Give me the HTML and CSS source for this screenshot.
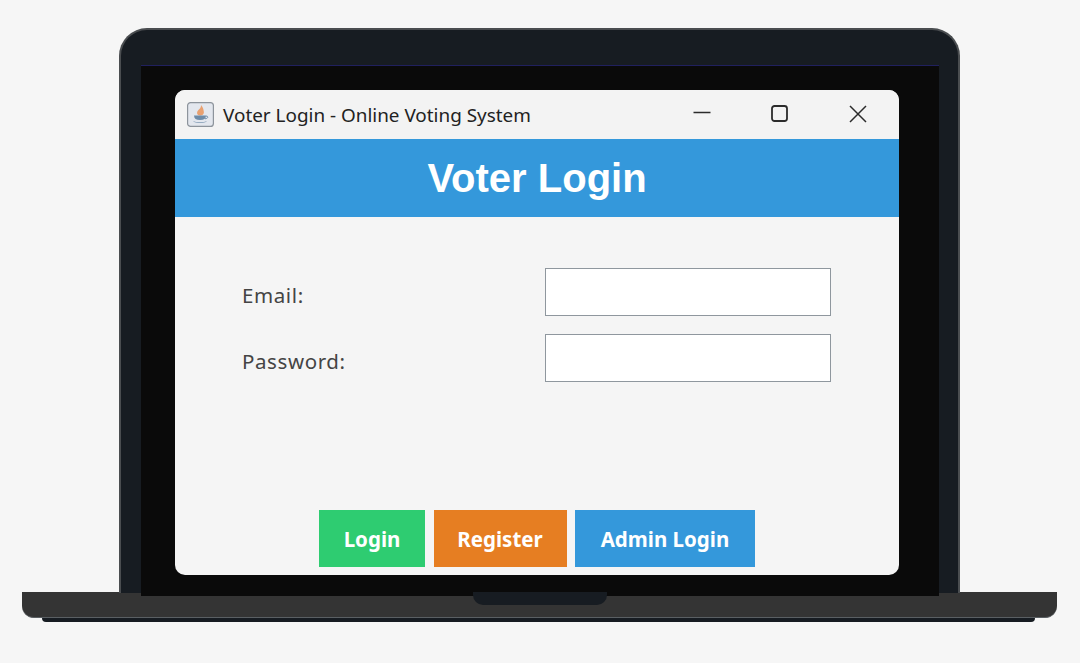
FILE: index.html
```html
<!DOCTYPE html>
<html lang="en">
<head>
    <meta charset="UTF-8">
    <meta name="viewport" content="width=device-width, initial-scale=1.0">
    <title>Voter Login - Online Voting System</title>
    <link rel="stylesheet" href="styles.css">
</head>
<body>
    <div class="laptop">
        <div class="lid">
            <div class="screen">
                <div class="window">
                    <div class="titlebar">
                        <svg class="app-icon" width="27" height="25" viewBox="0 0 27 25">
                            <rect x="0.6" y="0.6" width="25.8" height="23.8" rx="3" fill="#e3e7ee" stroke="#8d949c" stroke-width="1.2"/>
                            <path d="M14 3 C16.500 6 16.500 8 16.800 9.500 C17.300 12 15.500 13.500 13 13.500 C10 13.500 9.300 10.500 11 8.500 C12.500 7 14.300 5.500 14 3 Z" fill="#e8a070"/>
                            <path d="M7 13.500 H19 C19 16.500 17 18 13 18 C9 18 7 16.500 7 13.500 Z" fill="#6d8ba8"/>
                            <path d="M19 14 C21.500 14 21.500 16.500 18 16.800" fill="none" stroke="#6d8ba8" stroke-width="1"/>
                            <path d="M6 19 C9 20.800 17 20.800 20 19 C18 21.800 8 21.800 6 19 Z" fill="#7f99b3"/>
                        </svg>
                        <span class="window-title">Voter Login - Online Voting System</span>
                        <div class="window-controls">
                            <svg class="ctrl-min" width="18" height="4" viewBox="0 0 18 4"><path d="M0.500 1.500 H17.500" stroke="#2b2b2b" stroke-width="1.500"/></svg>
                            <svg class="ctrl-max" width="17" height="17" viewBox="0 0 17 17"><rect x="1" y="1" width="15" height="15" rx="2.500" fill="none" stroke="#2b2b2b" stroke-width="1.800"/></svg>
                            <svg class="ctrl-close" width="18" height="18" viewBox="0 0 18 18"><path d="M1 1 L17 17 M17 1 L1 17" stroke="#2b2b2b" stroke-width="1.500"/></svg>
                        </div>
                    </div>
                    <h1 class="banner">Voter Login</h1>
                    <form class="login-form">
                        <label class="field-label" for="email">Email:</label>
                        <input class="field-input" id="email" type="text">
                        <label class="field-label" for="password">Password:</label>
                        <input class="field-input" id="password" type="password">
                    </form>
                    <div class="actions">
                        <button class="btn btn-login">Login</button>
                        <button class="btn btn-register">Register</button>
                        <button class="btn btn-admin">Admin Login</button>
                    </div>
                </div>
            </div>
        </div>
        <div class="base">
            <div class="notch"></div>
        </div>
        <div class="base-shadow"></div>
    </div>
</body>
</html>
```

FILE: styles.css
```css
* {
    box-sizing: border-box;
}
body {
    margin: 0;
    background-color: #f6f6f6;
    font-family: "Noto Sans", Arial, sans-serif;
}
.laptop {
    display: flex;
    flex-direction: column;
    align-items: center;
    height: 663px;
    padding-top: 28px;
    overflow: hidden;
}

/* lid and screen */
.lid {
    width: 841px;
    height: 565px;
    margin-left: -1px;
    padding: 35px 19px 0 20px;
    background-color: #171c22;
    border: 2px solid #4a4d50;
    border-bottom: none;
    border-radius: 28px 28px 0 0;
    position: relative;
    z-index: 1;
}
.screen {
    height: 531px;
    padding: 24px 40px 0 34px;
    background-color: #0a0a0a;
    border-top: 1px solid #20205e;
}
.window {
    display: flex;
    flex-direction: column;
    height: 485px;
    background-color: #f5f5f5;
    border-radius: 10px;
    overflow: hidden;
}
.titlebar {
    display: flex;
    align-items: center;
    flex: 0 0 49px;
    padding-left: 12px;
    background-color: #f3f3f3;
}
.window-title {
    margin-left: 9px;
    font-size: 18.900px;
    color: #222;
}
.window-controls {
    display: flex;
    align-items: center;
    margin-left: auto;
}
.ctrl-min {
    margin-right: 60px;
    margin-bottom: 3px;
}
.ctrl-max {
    margin-right: 61px;
    margin-bottom: 2px;
}
.ctrl-close {
    margin-right: 32px;
    margin-bottom: 2px;
}

/* blue heading */
.banner {
    flex: 0 0 78px;
    margin: 0;
    background-color: #3498db;
    color: #fff;
    font-family: "Liberation Sans", Arial, sans-serif;
    font-size: 40px;
    font-weight: bold;
    line-height: 78px;
    text-align: center;
}

/* form */
.login-form {
    display: grid;
    grid-template-columns: 303px 286px;
    grid-auto-rows: 48px;
    row-gap: 18px;
    padding: 51px 0 0 67px;
}
.field-label {
    align-self: center;
    padding-top: 6px;
    font-size: 20.500px;
    letter-spacing: 0.600px;
    color: #444;
}
.field-input {
    background-color: #fff;
    border: 1px solid #8f979e;
    border-radius: 0;
}

/* buttons */
.actions {
    display: flex;
    justify-content: center;
    gap: 8.500px;
    margin-top: auto;
    padding-bottom: 8px;
}
.btn {
    height: 57px;
    padding: 0;
    border: none;
    color: #fff;
    font-family: "Noto Sans", Arial, sans-serif;
    font-size: 20.500px;
    font-weight: bold;
}
.btn-login {
    width: 106px;
    background-color: #2ecc71;
}
.btn-register {
    width: 133px;
    background-color: #e67e22;
}
.btn-admin {
    width: 180px;
    background-color: #3498db;
}

/* base */
.base {
    display: flex;
    justify-content: center;
    flex: 0 0 26px;
    width: 1035px;
    margin-top: -1px;
    margin-left: -1px;
    background-color: #343434;
    border-bottom: 1px solid #5a5f63;
    border-radius: 0 0 12px 12px;
}
.notch {
    width: 134px;
    height: 13px;
    background-color: #171c22;
    border-radius: 0 0 10px 10px;
    position: relative;
    z-index: 2;
}
.base-shadow {
    flex: 0 0 4px;
    width: 993px;
    margin-left: -3px;
    background-color: #171c22;
    border-radius: 0 0 6px 6px;
}
```
